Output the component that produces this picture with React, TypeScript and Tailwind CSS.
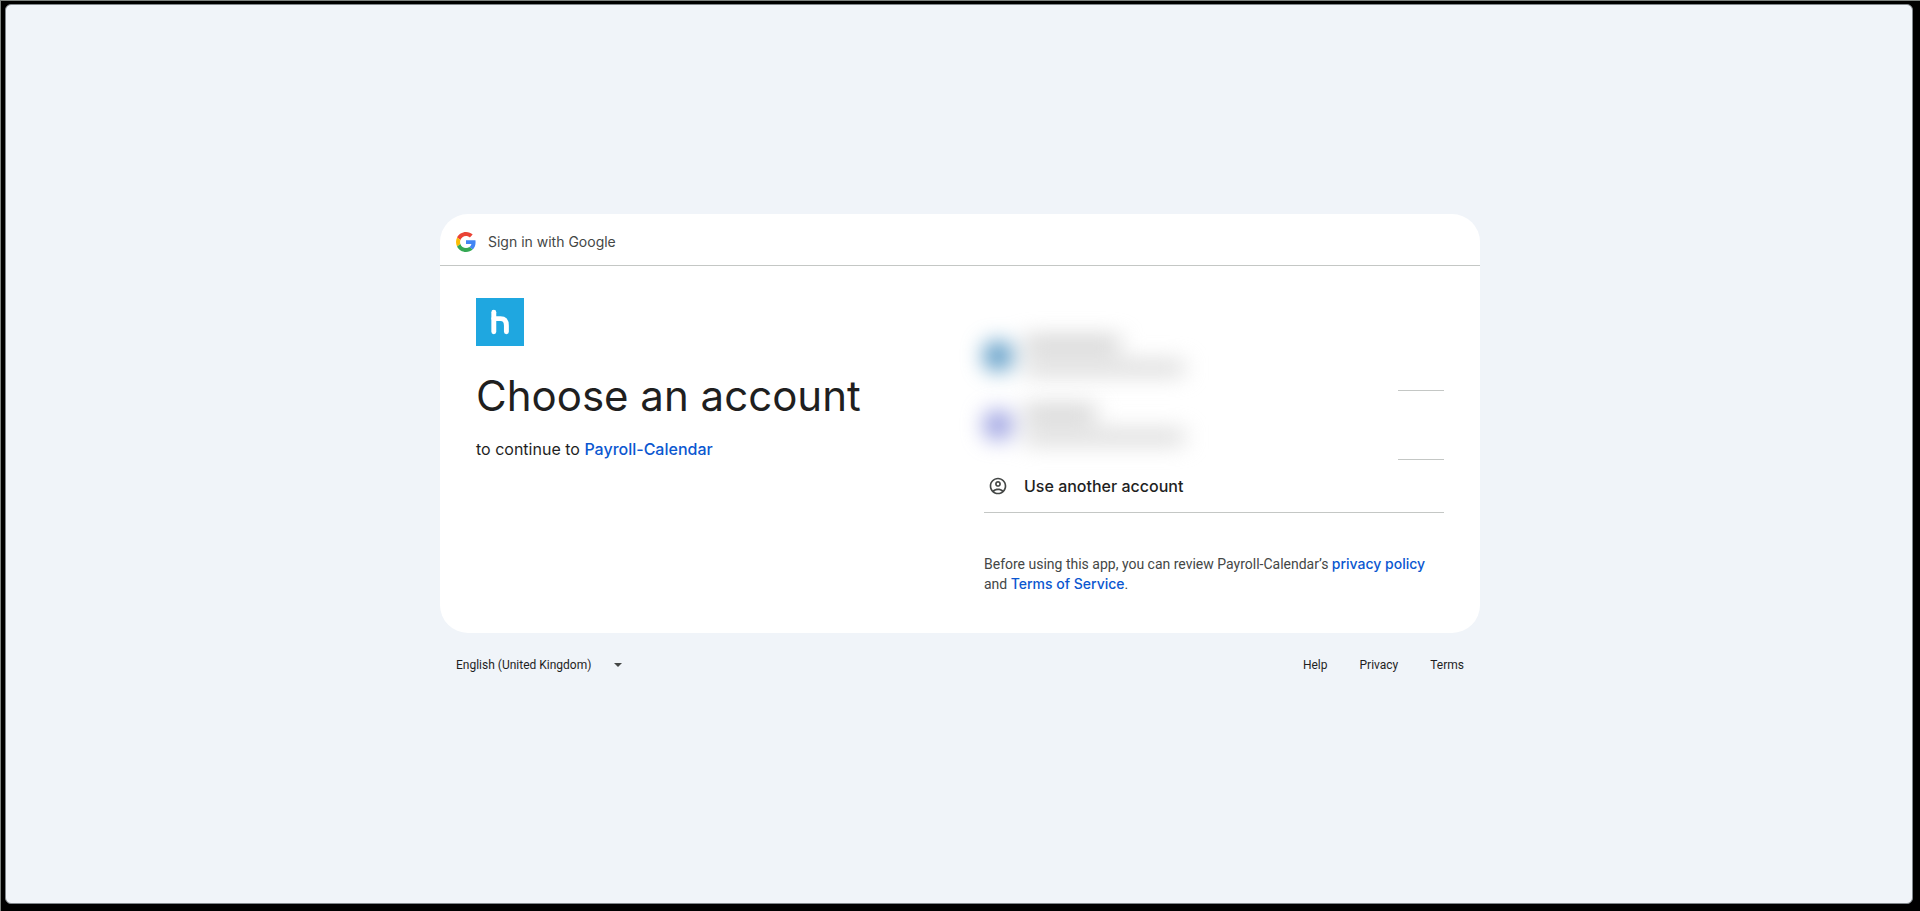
import { useState } from 'react';

const accounts = [
  { label: 'First account', avatar: 'bg-[#3a86ba]', name: 'w-24', email: 'w-40' },
  { label: 'Second account', avatar: 'bg-[#8a90dc]', name: 'w-18', email: 'w-40' },
];

const footerLinks = ['Help', 'Privacy', 'Terms'];

function GoogleLogo() {
  return (
    <svg viewBox="0 0 48 48" className="w-5 h-5" aria-hidden="true">
      <path fill="#EA4335" d="M24 9.5c3.54 0 6.71 1.22 9.21 3.6l6.85-6.85C35.9 2.38 30.47 0 24 0 14.62 0 6.51 5.38 2.56 13.22l7.98 6.19C12.43 13.72 17.74 9.5 24 9.5z" />
      <path fill="#4285F4" d="M46.98 24.55c0-1.57-.15-3.09-.38-4.55H24v9.02h12.94c-.58 2.96-2.26 5.48-4.78 7.18l7.73 6c4.51-4.18 7.09-10.36 7.09-17.65z" />
      <path fill="#FBBC05" d="M10.53 28.59c-.48-1.45-.76-2.99-.76-4.59s.27-3.14.76-4.59l-7.98-6.19C.92 16.46 0 20.12 0 24c0 3.88.92 7.54 2.56 10.78l7.97-6.19z" />
      <path fill="#34A853" d="M24 48c6.48 0 11.93-2.13 15.89-5.81l-7.73-6c-2.15 1.45-4.92 2.3-8.16 2.3-6.26 0-11.57-4.22-13.47-9.91l-7.98 6.19C6.51 42.62 14.62 48 24 48z" />
    </svg>
  );
}

function AppLogo() {
  return (
    <svg viewBox="0 0 48 48" className="w-12 h-12" aria-hidden="true">
      <rect width="48" height="48" fill="#1fa7e0" />
      <g fill="none" stroke="#fff" strokeWidth="4.9" strokeLinecap="round">
        <line x1="17.8" y1="14.2" x2="17.8" y2="33.8" />
        <path d="M17.8 20.6H24.5Q30.4 20.6 30.4 27.5V33.8" />
      </g>
    </svg>
  );
}

function PersonIcon() {
  return (
    <svg viewBox="0 0 24 24" className="w-5 h-5" fill="#444746" aria-hidden="true">
      <path d="M12 2C6.48 2 2 6.48 2 12s4.48 10 10 10 10-4.48 10-10S17.52 2 12 2zM7.35 18.5C8.66 17.56 10.26 17 12 17s3.34.56 4.65 1.5C15.34 19.44 13.74 20 12 20s-3.34-.56-4.65-1.5zm10.79-1.38C16.45 15.8 14.32 15 12 15s-4.45.8-6.14 2.12C4.7 15.73 4 13.95 4 12c0-4.42 3.58-8 8-8s8 3.58 8 8c0 1.95-.7 3.73-1.86 5.12z" />
      <path d="M12 6c-1.93 0-3.5 1.57-3.5 3.5S10.07 13 12 13s3.5-1.57 3.5-3.5S13.93 6 12 6zm0 5c-.83 0-1.5-.67-1.5-1.5S11.17 8 12 8s1.5.67 1.5 1.5S12.83 11 12 11z" />
    </svg>
  );
}

export default function App() {
  const [language, setLanguage] = useState('en-GB');

  return (
    <div className="min-h-screen flex bg-black border-t border-l border-[#7d827f] pt-[3px] pl-1 pr-[7px] pb-[7px] font-['Inter',sans-serif] text-[#1f1f1f]">
      <div className="flex-1 flex flex-col items-center justify-center pl-0.5 rounded-md border border-[#80868b] bg-[#f0f4f9]">
        <div className="w-full max-w-[1040px]">

          {/* CARD */}
          <main className="bg-white rounded-[28px] overflow-hidden">
            <header className="flex items-center gap-3 px-4 pt-[18px] pb-[13px] border-b border-[#c4c7c5]">
              <GoogleLogo />
              <span className="text-sm text-[#444746]">Sign in with Google</span>
            </header>

            <div className="grid grid-cols-1 md:grid-cols-2 gap-12 px-9 pt-8 pb-[39px]">
              <div>
                <AppLogo />
                <h1 className="mt-6 text-[42px] leading-[52px]">Choose an account</h1>
                <p className="mt-[15px] text-base">
                  to continue to <a href="#app" className="font-medium text-[#0b57d0]">Payroll-Calendar</a>
                </p>
              </div>

              <div className="pt-6">
                <ul>
                  {accounts.map((account) => (
                    <li key={account.label} className="flex flex-col">
                      <button type="button" aria-label={account.label} className="h-17 flex items-center gap-3 blur-[11px]">
                        <span className={`w-7 h-7 rounded-full ${account.avatar}`} />
                        <span className="flex flex-col gap-3">
                          <span className={`h-3 bg-[#c0c0c0] ${account.name}`} />
                          <span className={`h-3 bg-[#cecece] ${account.email}`} />
                        </span>
                      </button>
                      <span className="self-end w-[46px] h-px bg-[#c4c7c5]" />
                    </li>
                  ))}
                  <li className="border-b border-[#c4c7c5]">
                    <button type="button" className="w-full h-13 flex items-center gap-4 pl-1 font-medium">
                      <PersonIcon />
                      Use another account
                    </button>
                  </li>
                </ul>

                <p className="mt-[41px] font-['Roboto',sans-serif] text-sm text-[#444746]">
                  Before using this app, you can review Payroll-Calendar’s{' '}
                  <a href="#privacy-policy" className="font-['Inter',sans-serif] font-medium text-[#0b57d0]">privacy policy</a> and{' '}
                  <a href="#terms-of-service" className="font-['Inter',sans-serif] font-medium text-[#0b57d0]">Terms of Service</a>.
                </p>
              </div>
            </div>
          </main>

          {/* FOOTER */}
          <footer className="flex items-center justify-between px-4 pt-6 pb-[21px] font-['Roboto',sans-serif] text-xs">
            <div className="relative flex items-center">
              <select
                aria-label="Language"
                value={language}
                onChange={(e) => setLanguage(e.target.value)}
                className="h-4 appearance-none bg-transparent pr-10"
              >
                <option value="en-GB">English (United Kingdom)</option>
              </select>
              <svg viewBox="0 0 8 4" className="absolute right-2.5 w-2 h-1 pointer-events-none" fill="#444746" aria-hidden="true">
                <path d="M0 0h8L4 4z" />
              </svg>
            </div>
            <nav className="flex gap-8">
              {footerLinks.map((link) => (
                <a key={link} href={`#${link.toLowerCase()}`}>{link}</a>
              ))}
            </nav>
          </footer>
        </div>
      </div>
    </div>
  );
}
